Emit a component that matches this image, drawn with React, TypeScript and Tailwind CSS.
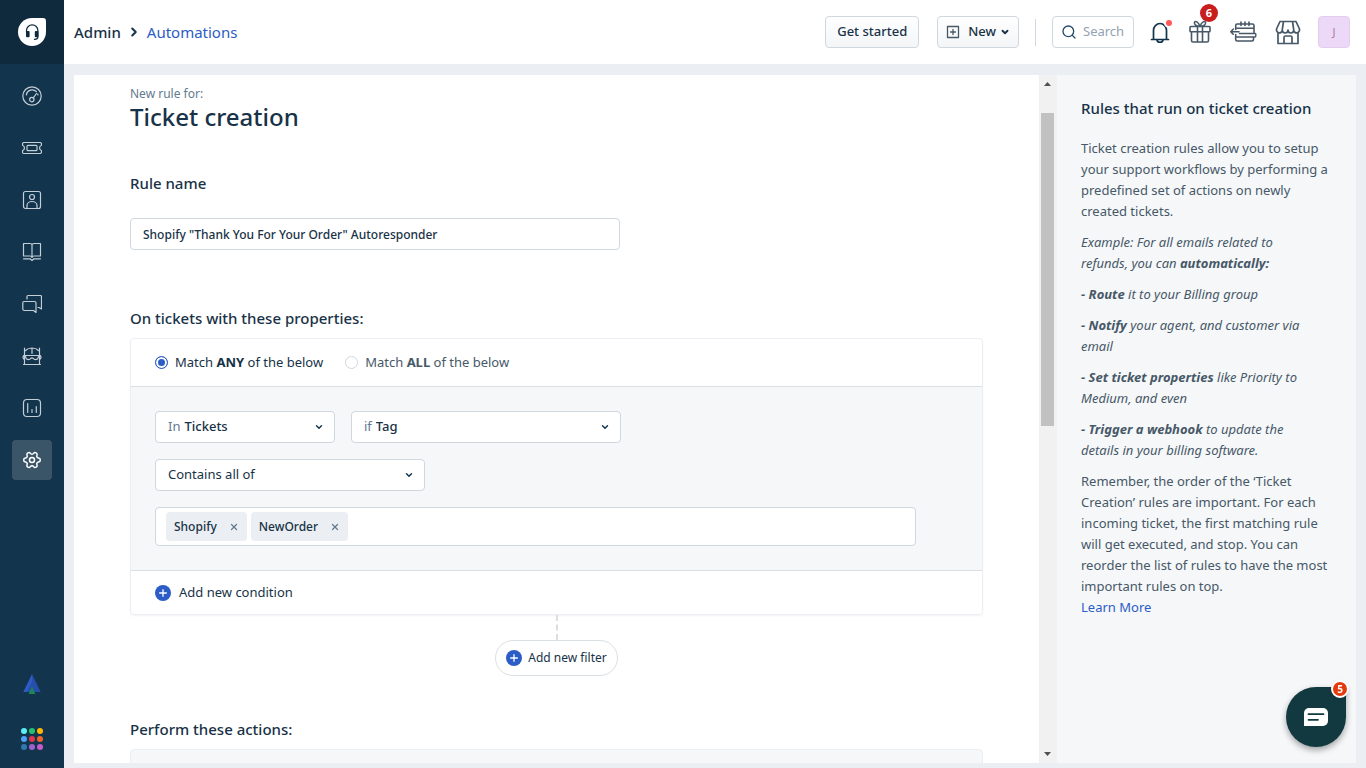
import { useState } from "react";
import type { ReactNode } from "react";
import { ChevronDown, ChevronRight, Search, Settings, X } from "lucide-react";

function Icon({ children, size = "size-5", box = "0 0 20 20" }: { children: ReactNode; size?: string; box?: string }) {
  return (
    <svg
      className={`${size} shrink-0`}
      viewBox={box}
      fill="none"
      stroke="currentColor"
      strokeWidth="1.2"
      strokeLinecap="round"
      strokeLinejoin="round"
      aria-hidden="true"
    >
      {children}
    </svg>
  );
}

const navItems = [
  {
    label: "Dashboard",
    icon: (
      <Icon>
        <circle cx="10" cy="10" r="9.2" />
        <path d="M4.3 8.8a6 6 0 0 1 10-3.3M15.7 8l.3 1M11.3 11.9l3.2-4.4" />
        <circle cx="9.8" cy="13.6" r="2.2" />
      </Icon>
    ),
  },
  {
    label: "Tickets",
    icon: (
      <Icon>
        <path d="M2 4.5h16c1 0 1.5.5 1.5 1.5v1.3c-2.6.8-2.6 4.6 0 5.4V14c0 1-.5 1.5-1.5 1.5H2C1 15.5.5 15 .5 14v-1.3c2.6-.8 2.6-4.6 0-5.400V6C.5 5 1 4.500 2 4.500z" />
        <rect x="5" y="7.3" width="10" height="5.4" rx="1" />
      </Icon>
    ),
  },
  {
    label: "Contacts",
    icon: (
      <Icon>
        <rect x="1.5" y="1.5" width="17" height="17" rx="2" />
        <circle cx="10" cy="7" r="2.5" />
        <path d="M5 18v-2.5a5 4 0 0 1 10 0V18" />
      </Icon>
    ),
  },
  {
    label: "Solutions",
    icon: (
      <Icon>
        <path d="M1.5 1.5h6.5a2 1.5 0 0 1 2 1.5v12.5a2 2 0 0 0-2-1.5H1.5zM18.5 1.5H12a2 1.5 0 0 0-2 1.5v12.5a2 2 0 0 1 2-1.5h6.5zM1.5 16.8H8l2 1.7 2-1.7h6.5" />
      </Icon>
    ),
  },
  {
    label: "Forums",
    icon: (
      <Icon>
        <path d="M5 5V2.5c0-.6.4-1 1-1h12.5c.6 0 1 .4 1 1v12.5l-2.5-1.5h-1" />
        <path d="M2 7.5h10.5c1 0 1.5.5 1.5 1.5v9.5L11.5 16.5H2.5C1.5 16.5.8 16 .8 15V9c0-1 .5-1.5 1.2-1.5z" />
      </Icon>
    ),
  },
  {
    label: "Bots",
    icon: (
      <Icon>
        <path d="M3.5 4.500C5 3 7.300 2 10 2s5 1 6.500 2.500M2.500 2v16M17.500 2v16M10 2v5.500M2.500 9.500h15M2.500 9c-2 .8-2 3.700 0 4.500M17.500 9c2 .8 2 3.700 0 4.500M1.500 18.500h17" />
        <path d="M3.500 10c0 2.800 2 4 3.700 3.500 1.200-.3 1.600-1.700 2.800-1.700s1.600 1.400 2.800 1.700c1.700.5 3.700-.7 3.700-3.500" />
      </Icon>
    ),
  },
  {
    label: "Reports",
    icon: (
      <Icon>
        <rect x="1.5" y="1.5" width="17" height="17" rx="3.5" />
        <path d="M5.7 5.5v9M10 11.5v3M14.3 8.5v6" />
      </Icon>
    ),
  },
  { label: "Admin", icon: <Settings className="size-5 rotate-90" strokeWidth={1.8} /> },
];

const switcherDots = [
  "#5ceef5", "#25c16f", "#ffb800",
  "#4aa3f5", "#e0354a", "#f2622a",
  "#3178b5", "#9d62d0", "#c65bcb",
];

function Sidebar() {
  return (
    <nav className="flex w-16 shrink-0 flex-col items-center bg-[#12344d]">
      <a href="#home" aria-label="Home" className="flex h-16 w-full items-center justify-center bg-[#0f2a3d]">
        <Icon size="size-7" box="0 0 28 28">
          <path d="M14 0h11a3 3 0 0 1 3 3v11A14 14 0 1 1 14 0z" fill="#fff" stroke="none" />
          <path d="M8.5 14v-1.5a5.7 5.7 0 0 1 11.400 0V19c0 1.500-1.500 2.300-3.500 2.300" stroke="#0f2a3d" />
          <rect x="8" y="13" width="3.6" height="6.2" rx="1" fill="#0f2a3d" stroke="none" />
          <rect x="16.8" y="13" width="3.6" height="6.2" rx="1" fill="#0f2a3d" stroke="none" />
        </Icon>
      </a>
      <div className="flex flex-col gap-3 pt-3">
        {navItems.map((item) => (
          <a
            key={item.label}
            href={`#${item.label.toLowerCase()}`}
            aria-label={item.label}
            className={`flex size-10 items-center justify-center rounded ${
              item.label === "Admin" ? "bg-[#3b5568] text-white" : "text-[#c4ced6]"
            }`}
          >
            {item.icon}
          </a>
        ))}
      </div>
      <div className="mt-auto flex flex-col items-center gap-[34px] pb-[18px]">
        <a href="#freddy" aria-label="Freddy">
          <Icon>
            <path d="M10 0l8.7 18h-4.2L10 10z" fill="#264eaa" stroke="none" />
            <path d="M10 0L1.3 18h4.2L10 10z" fill="#2f5cc4" stroke="none" />
            <path d="M10 8l5 10H5z" fill="#264eaa" stroke="none" />
            <path d="M10 12.5l3.4 7.5H6.6z" fill="#1f8554" stroke="none" />
          </Icon>
        </a>
        <button aria-label="Switch product" className="grid grid-cols-3 gap-[2px]">
          {switcherDots.map((color) => (
            <span key={color} className="size-[6px] rounded-full" style={{ backgroundColor: color }} />
          ))}
        </button>
      </div>
    </nav>
  );
}

function Header() {
  return (
    <header className="flex h-16 shrink-0 items-center bg-white pr-4 pl-2.5">
      <div className="flex items-center text-[15px]">
        <a href="#admin" className="font-medium">Admin</a>
        <ChevronRight className="mx-1.5 size-3.5" strokeWidth={3.5} />
        <a href="#automations" className="text-[#2c5cc5]">Automations</a>
      </div>
      <div className="ml-auto flex items-center gap-4">
        <div className="flex gap-[18px]">
          <button className="h-8 rounded border border-[#cfd7df] bg-linear-to-b from-white to-[#f3f5f7] px-[11px] text-[13px] font-medium">
            Get started
          </button>
          <button className="flex h-8 items-center rounded border border-[#cfd7df] bg-linear-to-b from-white to-[#f3f5f7] px-2 text-[13px] font-medium">
            <Icon size="size-3.5" box="0 0 14 14">
              <path d="M1.5 1.5h11v11h-11zM7 4.500v5M4.500 7h5" stroke="#475867" strokeWidth="1.3" />
            </Icon>
            <span className="mr-1 ml-2">New</span>
            <ChevronDown className="size-2.5" strokeWidth={4.5} />
          </button>
        </div>
        <span className="h-[27px] w-px bg-[#cfd7df]" />
        <label className="flex h-8 w-[82px] items-center gap-1.5 rounded border border-[#cfd7df] px-2">
          <Search className="size-4 shrink-0 text-[#264966]" />
          <input aria-label="Search" placeholder="Search" className="w-full min-w-0 text-[13px] outline-none placeholder:text-[#92a2b1]" />
        </label>
        <button aria-label="Notifications" className="relative">
          <Icon size="w-5 h-6" box="0 0 20 24">
            <path d="M1.5 19.5h17M3.5 19V10.500a6.500 7 0 0 1 13 0V19M7 20c.5 3 5.500 3 6 0" stroke="#12344d" strokeWidth="1.7" />
          </Icon>
          <span className="absolute top-0 -right-0.5 size-1.5 rounded-full bg-[#ff5959] ring-2 ring-white" />
        </button>
        <button aria-label="What's new" className="relative flex w-7 justify-center text-[#475867]">
          <Icon size="size-6" box="0 0 24 24">
            <path
              d="M2.8 6.5h18.4c.6 0 .8.3.8.8V11c0 .6-.3.8-.8.8H2.8c-.5 0-.8-.2-.8-.8V7.3c0-.5.3-.8.8-.8zM3.5 12v8.5c0 1 .5 1.5 1.5 1.5h14c1 0 1.5-.5 1.5-1.5V12M9.500 6.500V22M14.500 6.500V22M12 6.500C8 6 6 4.500 6.500 2.500s4-1 5.500 4M12 6.500c4-.5 6-2 5.500-4s-4-1-5.500 4"
              strokeWidth="1.6"
            />
          </Icon>
          <span className="absolute -top-4 left-3.5 flex size-[18px] items-center justify-center rounded-full bg-[#c81e1e] text-[11px] font-bold text-white">
            6
          </span>
        </button>
        <button aria-label="Schedule" className="text-[#475867]">
          <Icon size="size-7" box="0 0 28 28">
            <path
              d="M5.7 11.500V7.500c0-.8.7-1.500 1.500-1.500h15.300c.8 0 1.500.7 1.500 1.500v7M5.700 10.300H24M11 4v3.500M15 4v3.500M19 4v3.500M.8 13.700H9M3.200 11.200L.8 13.700l2.400 2.500M5.700 16.500v4.800c0 1 .7 1.700 1.700 1.700h14.400c1 0 1.700-.7 1.700-1.700v-2M9.500 15.500h15.700c.8 0 .8 3.500-.2 3.500H7"
              strokeWidth="1.6"
            />
          </Icon>
        </button>
        <button aria-label="Marketplace" className="text-[#475867]">
          <Icon size="size-7" box="0 0 28 28">
            <path
              d="M6 3.5h16l3.5 7.5c.5 5-5.5 5-5.8 1 0 4-5.7 4-5.7 0 0 4-5.7 4-5.7 0-.3 4-6.3 4-5.8-1zM9.5 3.5L8.3 11.5M18.5 3.5l1.200 8M4 14.500v11h20v-11M10 25v-5.500c0-1 .5-1.500 1.500-1.500h5c1 0 1.500.5 1.500 1.500V25"
              strokeWidth="1.7"
            />
          </Icon>
        </button>
        <button className="size-8 rounded border border-[#e3cdf0] bg-[#ebd9f7] text-[11px] text-[#b5789b]">J</button>
      </div>
    </header>
  );
}

function Field({ prefix, label, value, options, width, bold }: {
  prefix?: string; label: string; value: string; options: string[]; width: string; bold?: boolean;
}) {
  return (
    <label className={`flex h-8 items-center gap-1 rounded border border-[#cfd7df] bg-white pr-2.5 pl-3 ${width}`}>
      {prefix && <span className="text-[#647a8e]">{prefix}</span>}
      <select
        aria-label={label}
        defaultValue={value}
        className={`min-w-0 flex-1 appearance-none bg-transparent outline-none ${bold ? "font-medium" : ""}`}
      >
        {options.map((o) => (
          <option key={o}>{o}</option>
        ))}
      </select>
      <ChevronDown className="pointer-events-none size-2.5 text-[#12344d]" strokeWidth={3.5} />
    </label>
  );
}

function PlusBadge() {
  return (
    <svg className="size-4 shrink-0" viewBox="0 0 16 16" aria-hidden="true">
      <circle cx="8" cy="8" r="8" fill="#2c5cc5" />
      <path d="M8 4.2v7.6M4.2 8h7.6" stroke="#fff" strokeWidth="1.3" />
    </svg>
  );
}

function RuleForm() {
  const [match, setMatch] = useState("ANY");
  const [tags, setTags] = useState(["Shopify", "NewOrder"]);

  return (
    <main className="min-w-0 flex-1 overflow-y-auto bg-white px-14 pt-2.5 text-[13px] [scrollbar-width:none]">
      <p className="text-[12px] leading-[18px] text-[#647a8e]">New rule for:</p>
      <h1 className="text-2xl leading-7 font-medium">Ticket creation</h1>

      <label htmlFor="rule-name" className="mt-10 block w-max text-[15px] leading-6 font-medium">Rule name</label>
      <input
        id="rule-name"
        defaultValue={'Shopify "Thank You For Your Order" Autoresponder'}
        className="mt-[23px] block h-8 w-full max-w-[490px] rounded border border-[#cfd7df] px-3 text-[12px] font-medium outline-none"
      />

      <h2 className="mt-14 text-[15px] leading-6 font-medium">On tickets with these properties:</h2>
      <section className="mt-2 rounded border border-[#ebeff3] shadow-xs">
        <div className="flex h-12 items-center gap-[22px] border-b border-[#dadfe3] px-6">
          {["ANY", "ALL"].map((kind) => (
            <label key={kind} className={`flex items-center gap-[7px] ${match === kind ? "" : "text-[#475867]"}`}>
              <input
                type="radio"
                name="match"
                checked={match === kind}
                onChange={() => setMatch(kind)}
                className="size-[13px] appearance-none rounded-full border border-[#cfd7df] bg-white checked:border-[#2c5cc5] checked:bg-[#2c5cc5] checked:shadow-[inset_0_0_0_2px_#fff]"
              />
              <span>Match <b>{kind}</b> of the below</span>
            </label>
          ))}
        </div>
        <div className="flex flex-col gap-4 border-b border-[#dadfe3] bg-[#f5f7f9] px-6 py-6">
          <div className="flex gap-4">
            <Field prefix="In" label="Entity" value="Tickets" options={["Tickets", "Contacts"]} width="w-[180px]" bold />
            <Field prefix="if" label="Property" value="Tag" options={["Tag", "Status"]} width="w-[270px]" bold />
          </div>
          <Field label="Operator" value="Contains all of" options={["Contains all of", "Contains any of"]} width="w-[270px]" />
          <div className="mr-[42px] flex h-[39px] items-center gap-1 rounded border border-[#cfd7df] bg-white px-2.5">
            {tags.map((tag) => (
              <span key={tag} className="flex h-[29px] items-center gap-3 rounded bg-[#ebeff3] px-2 text-[12px] font-medium">
                {tag}
                <button aria-label={`Remove ${tag}`} onClick={() => setTags(tags.filter((t) => t !== tag))}>
                  <X className="size-2.5 text-[#647a8e]" strokeWidth={3} />
                </button>
              </span>
            ))}
            <input aria-label="Add tag" className="min-w-0 flex-1 outline-none" />
          </div>
        </div>
        <div className="flex h-[43px] items-center px-6">
          <button className="flex items-center gap-2">
            <PlusBadge />
            Add new condition
          </button>
        </div>
      </section>

      <div className="flex flex-col items-center">
        <span className="h-[25px] border-l-2 border-dashed border-[#dadfe3]" />
        <button className="flex h-9 items-center gap-1.5 rounded-full border border-[#dadfe3] px-2.5 text-[12px]">
          <PlusBadge />
          Add new filter
        </button>
      </div>

      <h2 className="mt-[41px] text-[15px] leading-6 font-medium">Perform these actions:</h2>
      <section className="mt-2 h-40 rounded border border-[#ebeff3] bg-[#f5f7f9]" />
    </main>
  );
}

function ScrollRail() {
  return (
    <div className="flex w-[18px] shrink-0 flex-col items-start bg-[#f1f1f1] py-[7px] pl-0.5" aria-hidden="true">
      <svg className="mx-[3px] h-1 w-[7px] shrink-0" viewBox="0 0 7 4"><path d="M0 4L3.5 0 7 4z" fill="#505050" /></svg>
      <div className="flex-1 pt-[27px]">
        <div className="h-[49%] w-[13px] bg-[#c1c1c1]" />
      </div>
      <svg className="mx-[3px] h-1 w-[7px] shrink-0" viewBox="0 0 7 4"><path d="M0 0L3.5 4 7 0z" fill="#505050" /></svg>
    </div>
  );
}

function HelpPanel() {
  return (
    <aside className="w-[299px] shrink-0 bg-[#f5f7f9] px-6 pt-[21px] text-[13px] leading-[21px] text-[#475867]">
      <h2 className="mb-[18px] text-[15px] leading-6 font-medium whitespace-nowrap text-[#183247]">Rules that run on ticket creation</h2>
      <div className="flex flex-col gap-2.5">
        <p>Ticket creation rules allow you to setup your support workflows by performing a predefined set of actions on newly created tickets.</p>
        <div className="flex flex-col gap-2.5 pr-4 italic">
          <p>Example: For all emails related to refunds, you can <b>automatically:</b></p>
          <p><b>- Route</b> it to your Billing group</p>
          <p><b>- Notify</b> your agent, and customer via email</p>
          <p><b>- Set ticket properties</b> like Priority to Medium, and even</p>
          <p><b>- Trigger a webhook</b> to update the details in your billing software.</p>
        </div>
        <p>
          Remember, the order of the ‘Ticket Creation’ rules are important. For each incoming ticket, the first matching rule will get executed, and stop. You can reorder the list of rules to have the most important rules on top.
          <br />
          <a href="#learn" className="text-[#2c5cc5]">Learn More</a>
        </p>
      </div>
    </aside>
  );
}

export default function App() {
  return (
    <div className="flex h-screen bg-[#ebeff3] font-['Noto_Sans','Open_Sans',sans-serif] text-[#183247]">
      <Sidebar />
      <div className="flex min-w-0 flex-1 flex-col">
        <Header />
        <div className="mx-2.5 mt-[11px] mb-[5px] flex min-h-0 flex-1">
          <RuleForm />
          <ScrollRail />
          <HelpPanel />
        </div>
      </div>

      {/* Chat launcher */}
      <button
        aria-label="Open chat"
        className="fixed right-5 bottom-[21px] flex size-[60px] items-center justify-center rounded-full rounded-tr-none bg-[#12393f] shadow-[0_3px_6px_rgba(0,0,0,0.35)]"
      >
        <svg className="h-[18px] w-6" viewBox="0 0 24 18" aria-hidden="true">
          <path d="M5 0h14a5 5 0 0 1 5 5v8a5 5 0 0 1-5 5H0V5a5 5 0 0 1 5-5z" fill="#fff" />
          <path d="M4.5 6.2h15M4.5 11.8h9.5" stroke="#12393f" strokeWidth="1.8" strokeLinecap="round" />
        </svg>
        <span className="absolute -top-[7px] -right-[3px] flex size-[18px] items-center justify-center rounded-full border-2 border-white bg-[#e43b0e] text-[10px] font-bold text-white shadow">
          5
        </span>
      </button>
    </div>
  );
}
